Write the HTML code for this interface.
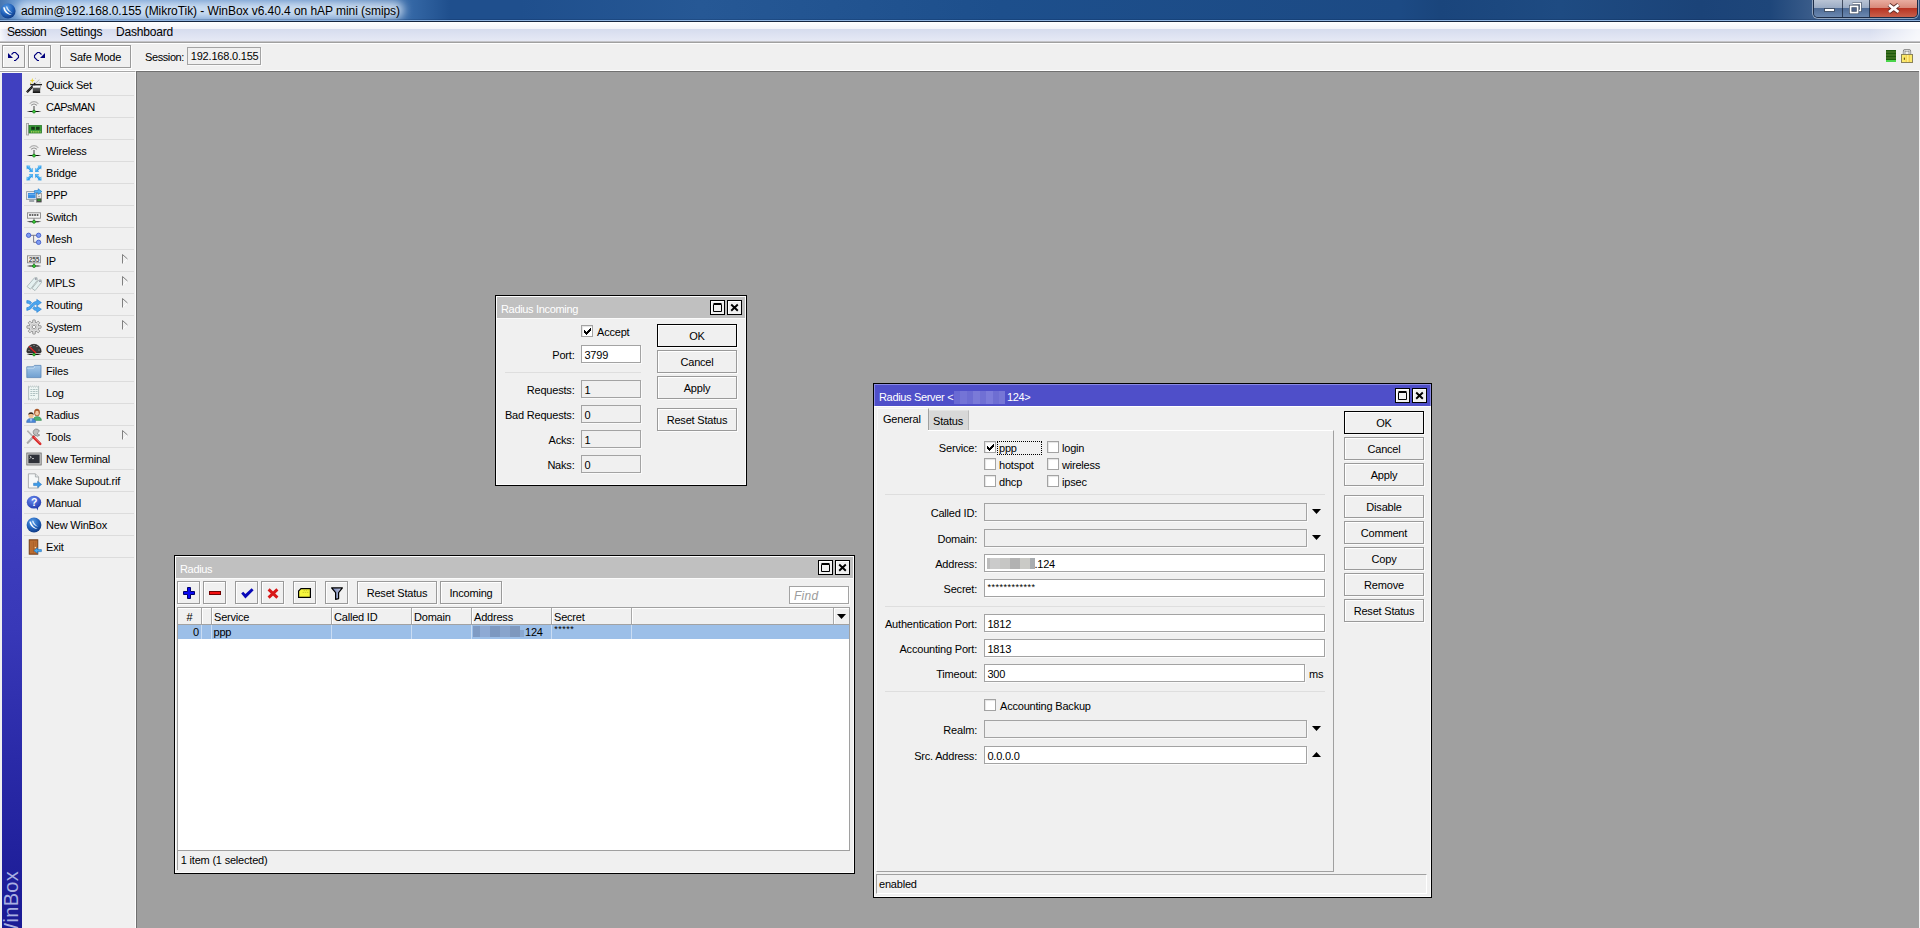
<!DOCTYPE html>
<html lang="en"><head><meta charset="utf-8"><title>WinBox</title>
<style>
html,body{margin:0;padding:0}
body{width:1920px;height:928px;position:relative;overflow:hidden;background:#a0a0a0;font:11px "Liberation Sans",sans-serif;letter-spacing:-0.2px;color:#000;-webkit-font-smoothing:antialiased}
div,span{position:absolute;box-sizing:border-box;white-space:nowrap}
svg{position:absolute;overflow:visible}
.t{line-height:14px;height:14px}
.r{text-align:right}
.c{text-align:center}
.btn{border:1px solid #9a9a9a;background:#f0f0f0;box-shadow:inset 1px 1px 0 #fff,1px 1px 0 #fcfcfc;text-align:center}
.btn.def{border-color:#000}
.fld{border:1px solid #a3a3a3;background:#fff;box-shadow:1px 1px 0 #fafafa}
.fld.ro{background:#f0f0f0}
.cb{width:12px;height:12px;border:1px solid #a3a3a3;background:#fff;box-shadow:inset 1px 1px 1px #e4e4e4}
.win{background:#f0f0f0;border:1px solid #000;box-shadow:inset 0 0 0 1px #fcfcfc}
.tb{left:1px;top:1px;right:1px;height:21px;background:#c0c0c0;color:#fff;box-shadow:0 1px 0 #fafafa}
.tb.act{background:#4f4fc9;color:#fff;box-shadow:0 1px 0 #fff,-1px 0 0 #8a8ae2,1px 0 0 #8a8ae2,0 -1px 0 #8a8ae2,-1px -1px 0 #8a8ae2,1px -1px 0 #8a8ae2}
.wb{width:15px;height:15px;border:1px solid #000;background:#f0f0f0;box-shadow:inset 1px 1px 0 #fff}
.sep{height:1px;background:#dedede}
.mi{left:24px;width:110px;height:22px;border-bottom:1px solid #dcdcdc}
.mi .t{left:22px;top:4px}
</style></head>
<body>
<div style="left:0;top:0;width:1920px;height:22px;background:linear-gradient(90deg,#4676b2 0,#5f8fc9 12px,#6c9ad2 60px,#5785c1 330px,#3568a6 410px,#1f4f8d 450px,#1f4f8d 520px,#265895 700px,#1d4f8c 1000px,#1c4a84 1400px,#1a457c 1440px,#1e4b82 1560px,#1b4378 1700px,#1e467a 1770px,#3a5c8a 1812px,#2c5080 1920px)"></div>
<div style="left:16px;top:1px;width:388px;height:18px;border-radius:9px;background:rgba(232,242,252,.8);filter:blur(5px)"></div>
<div style="left:0;top:19px;width:1920px;height:1px;background:rgba(0,20,60,.18)"></div>
<div style="left:0;top:20px;width:1920px;height:1px;background:#8fb3df"></div>
<div style="left:0;top:21px;width:1920px;height:1px;background:#142440"></div>
<svg width="16" height="16" viewBox="0 0 16 16" style="left:0px;top:2.5px" ><defs><radialGradient id="wbg" cx=".4" cy=".3" r=".8"><stop offset="0" stop-color="#5aa0e8"/><stop offset=".55" stop-color="#1f5fb8"/><stop offset="1" stop-color="#0b2f74"/></radialGradient></defs><circle cx="8" cy="8" r="7.6" fill="url(#wbg)"/><path d="M3.2 4.2C3.6 8.6 6.8 11.6 11.8 11.9C8.2 10.6 5.6 8.2 4.6 4.2Z" fill="#fff"/><path d="M5.9 3.6C6.6 7 8.9 9.3 12.6 9.9C10 8.6 8.1 6.6 7.2 3.6Z" fill="#e8f2ff" opacity=".9"/></svg>
<div class="t" style="left:21px;top:3px;font-size:12px;line-height:16px;height:16px;letter-spacing:-0.06px">admin@192.168.0.155 (MikroTik) - WinBox v6.40.4 on hAP mini (smips)</div>
<div style="left:1813px;top:0;width:105px;height:18px;border:1px solid rgba(20,30,50,.75);border-top:none;border-radius:0 0 5px 5px;box-shadow:0 0 0 1px rgba(255,255,255,.45);overflow:hidden"><div style="left:0;top:0;width:29px;height:17px;background:linear-gradient(180deg,#b9c4d5 0,#9aabc4 47%,#4f6c96 50%,#6b88b0 100%);border-right:1px solid rgba(20,30,50,.7)"></div><div style="left:29px;top:0;width:27px;height:17px;background:linear-gradient(180deg,#b9c4d5 0,#9aabc4 47%,#4f6c96 50%,#6b88b0 100%);border-right:1px solid rgba(20,30,50,.7)"></div><div style="left:56px;top:0;width:47px;height:17px;background:linear-gradient(180deg,#e9ada0 0,#d88878 47%,#b93422 50%,#c9604c 100%)"></div></div>
<svg width="12" height="8" viewBox="0 0 12 8" style="left:1823.5px;top:6.3px" ><rect x=".5" y="2.5" width="10" height="3" fill="#fff" stroke="#3b4a60" stroke-width=".9"/></svg>
<svg width="14" height="13" viewBox="0 0 14 13" style="left:1848px;top:2px" ><path d="M4.5 1.5H12.5V8.5H10.5" fill="none" stroke="#3b4a60" stroke-width="2.6"/><path d="M4.5 1.5H12.5V8.5H10.5" fill="none" stroke="#fff" stroke-width="1.3"/><rect x="2.6" y="4.4" width="7" height="6.2" fill="#50648a" stroke="#3b4a60" stroke-width="3"/><rect x="2.6" y="4.4" width="7" height="6.2" fill="none" stroke="#fff" stroke-width="1.7"/></svg>
<svg width="14" height="11" viewBox="0 0 14 11" style="left:1887px;top:3px" ><path d="M2 1.8L11.5 9M11.5 1.8L2 9" stroke="#5a2a26" stroke-width="4.4" fill="none"/><path d="M2 1.8L11.5 9M11.5 1.8L2 9" stroke="#fff" stroke-width="2.8" fill="none"/></svg>
<div style="left:0;top:22px;width:1920px;height:19px;background:linear-gradient(180deg,#fff 0,#f3f4fa 36%,#d6dcee 37%,#e6e9f5 100%)"></div>
<div style="left:0;top:22px;width:1920px;height:19px;background:linear-gradient(90deg,rgba(255,255,255,.75) 0,rgba(255,255,255,0) 8px,rgba(255,255,255,0) 1870px,rgba(255,255,255,.75) 1918px)"></div>
<div style="left:0;top:41px;width:1920px;height:1px;background:#c4c4c8"></div>
<div style="left:0;top:42px;width:1920px;height:1px;background:#a0a0a0"></div>
<div style="left:0;top:43px;width:1920px;height:28px;background:#f0f0f0;border-top:1px solid #fff"></div>
<div class="t" style="left:7px;top:24px;font-size:12px;line-height:16px;height:16px;letter-spacing:-0.5px">Session</div>
<div class="t" style="left:60px;top:24px;font-size:12px;line-height:16px;height:16px;letter-spacing:-0.12px">Settings</div>
<div class="t" style="left:116px;top:24px;font-size:12px;line-height:16px;height:16px;letter-spacing:-0.2px">Dashboard</div>
<div class="btn" style="left:2px;top:45px;width:23px;height:23px;line-height:23px"></div>
<svg width="30" height="30" viewBox="0 0 30 30" style="left:0px;top:42px" ><path d="M11.5 12.5L13.5 10.5H15.5L18.5 13.5V15.5L15.5 18.5H14" fill="none" stroke="#00007c" stroke-width="1.1"/><path d="M8 11V16H13Z" fill="#00007c"/></svg>
<div class="btn" style="left:28px;top:45px;width:23px;height:23px;line-height:23px"></div>
<svg width="30" height="30" viewBox="0 0 30 30" style="left:23px;top:42px" ><path d="M18.5 12.5L16.5 10.5H14.5L11.5 13.5V15.5L14.5 18.5H16" fill="none" stroke="#00007c" stroke-width="1.1"/><path d="M22 11V16H17Z" fill="#00007c"/></svg>
<div class="btn" style="left:60px;top:45px;width:71px;height:23px;line-height:23px">Safe Mode</div>
<div class="t" style="left:145px;top:50px;letter-spacing:-.4px">Session:</div>
<div class="fld ro" style="left:187px;top:47px;width:74px;height:18px"><span class="t" style="left:2.4px;top:2px"><span style="position:relative;top:-1px;left:.4px">192.168.0.155</span></span></div>
<div style="left:1886px;top:50px;width:10px;height:12px;background:repeating-linear-gradient(180deg,#1d5a0d 0,#1d5a0d 1px,#3b6e1f 1px,#3b6e1f 3px);border-bottom:2px solid #4ad44a"></div>
<svg width="14" height="16" viewBox="0 0 14 16" style="left:1900px;top:48px" ><path d="M4.1 6.5V3.7Q4.1 2.3 5.5 2.3H8.5Q9.9 2.3 9.9 3.7V6.5" fill="none" stroke="#7c7c7c" stroke-width="2.5"/><path d="M4.1 6.5V3.7Q4.1 2.3 5.5 2.3H8.5Q9.9 2.3 9.9 3.7V6.5" fill="none" stroke="#f4f4f4" stroke-width="1"/><rect x="1.5" y="6.5" width="11" height="8" fill="#fbe96c" stroke="#8a8258"/><rect x="5.6" y="7" width="1.6" height="7" fill="#f6d455"/><rect x="7.2" y="7" width="1.4" height="7" fill="#fff08a"/><rect x="8.6" y="7" width="1.4" height="7" fill="#f3cf52"/><rect x="3.8" y="9.6" width="1.2" height="2.2" fill="#6a5a10"/></svg>
<div style="left:0;top:70px;width:1920px;height:1px;background:#fff"></div>
<div style="left:0;top:71px;width:136px;height:857px;background:#f0f0f0;border-top:1px solid #a8a8a8;border-right:1px solid #fff"></div>
<div style="left:0;top:72px;width:135px;height:1px;background:#fbfbfb"></div>
<div style="left:2px;top:73px;width:20px;height:855px;background:linear-gradient(180deg,#4040c0 0,#4040c0 50%,#3838b8 65%,#2a2aa8 80%,#1a1a94 100%)"></div>
<div style="left:1px;top:1171px;width:300px;height:20px;transform-origin:0 0;transform:rotate(-90deg);font-size:20px;line-height:20px;text-align:right;color:#a9afe2;letter-spacing:.3px">RouterOS WinBox</div>
<div class="mi" style="top:74px"><svg width="16" height="16" viewBox="0 0 16 16" style="left:2px;top:3px" ><path d="M5.6 2.9l.7-1.9.7 1.9 1.9.7-1.9.7-.7 1.9-.7-1.9-1.9-.7z" fill="#ecd83a"/><circle cx="4.6" cy="6.3" r=".7" fill="#e8d030"/><circle cx="9.6" cy="1.2" r=".45" fill="#aaa"/><circle cx="14" cy="5.6" r=".5" fill="#999"/><path d="M.9 15.2L9.6 6.4" stroke="#111" stroke-width="2.3"/><path d="M1.4 14.7L9.6 6.4" stroke="#999" stroke-width=".6" stroke-dasharray="1 1"/><path d="M9.6 6.4L13.4 2.6" stroke="#e8e8e8" stroke-width="2.3"/><path d="M9.6 6.4L13.4 2.6" stroke="#999" stroke-width=".5"/><path d="M4.2 7.6H16" stroke="#222" stroke-width="1.3"/><defs><linearGradient id="hat" x1="0" y1="0" x2="0" y2="1"><stop offset="0" stop-color="#777"/><stop offset=".5" stop-color="#555"/><stop offset="1" stop-color="#333"/></linearGradient></defs><path d="M6.4 8.2H14.6L14 15.4H7Z" fill="url(#hat)"/><rect x="6.9" y="8.8" width="7.2" height="1.9" fill="#fafafa"/><path d="M6.8 15.3H14.2" stroke="#111" stroke-width="1.3"/></svg>
<div class="t">Quick Set</div></div>
<div class="mi" style="top:96px"><svg width="16" height="16" viewBox="0 0 16 16" style="left:2px;top:3px" ><path d="M3.6 4.8Q8 .6 12.4 4.8" fill="none" stroke="#b0b0b0" stroke-width="1.1"/><path d="M5.2 6.4Q8 3.6 10.8 6.4" fill="none" stroke="#8e8e8e" stroke-width="1.1"/><rect x="7.2" y="7" width="1.6" height="5.2" fill="#858585"/><path d="M.6 12.6L4 12.1H12L15.4 12.6L12 13.1H4Z" fill="#111"/><circle cx="8" cy="12.6" r="1.45" fill="#3ccf3c" stroke="#157a15" stroke-width=".8"/></svg>
<div class="t" style="letter-spacing:-.55px">CAPsMAN</div></div>
<div class="mi" style="top:118px"><svg width="16" height="16" viewBox="0 0 16 16" style="left:2px;top:3px" ><rect x=".6" y="2.5" width="2" height="11.5" fill="#e4e4e4" stroke="#9a9a9a" stroke-width=".8"/><rect x="3" y="4.5" width="12.5" height="7.5" fill="#3a9c3a" stroke="#2a7a2a" stroke-width=".8"/><rect x="5.2" y="5.8" width="3.6" height="3" fill="#163816"/><rect x="10" y="5.8" width="3.6" height="3" fill="#163816"/><path d="M5 10.8H14.5" stroke="#c8e060" stroke-width="1.2" stroke-dasharray="1.2 1"/></svg>
<div class="t">Interfaces</div></div>
<div class="mi" style="top:140px"><svg width="16" height="16" viewBox="0 0 16 16" style="left:2px;top:3px" ><path d="M3.6 4.8Q8 .6 12.4 4.8" fill="none" stroke="#b0b0b0" stroke-width="1.1"/><path d="M5.2 6.4Q8 3.6 10.8 6.4" fill="none" stroke="#8e8e8e" stroke-width="1.1"/><rect x="7.2" y="7" width="1.6" height="5.2" fill="#858585"/><path d="M.6 12.6L4 12.1H12L15.4 12.6L12 13.1H4Z" fill="#111"/><circle cx="8" cy="12.6" r="1.45" fill="#3ccf3c" stroke="#157a15" stroke-width=".8"/></svg>
<div class="t">Wireless</div></div>
<div class="mi" style="top:162px"><svg width="16" height="16" viewBox="0 0 16 16" style="left:2px;top:3px" ><g transform="translate(3.7 3.7) rotate(45)"><path d="M-4.5 0L-1.5 -2.7V-1.2H1.5V-2.7L4.5 0L1.5 2.7V1.2H-1.5V2.7Z" fill="#2f9eec"/><path d="M-3.3 -.1L-2 -1.2V-.35H2V-1.2L3.3 -.1" fill="none" stroke="#8fd6fb" stroke-width=".6"/></g><g transform="translate(12.3 3.7) rotate(-45)"><path d="M-4.5 0L-1.5 -2.7V-1.2H1.5V-2.7L4.5 0L1.5 2.7V1.2H-1.5V2.7Z" fill="#2f9eec"/><path d="M-3.3 -.1L-2 -1.2V-.35H2V-1.2L3.3 -.1" fill="none" stroke="#8fd6fb" stroke-width=".6"/></g><g transform="translate(3.7 12.3) rotate(-45)"><path d="M-4.5 0L-1.5 -2.7V-1.2H1.5V-2.7L4.5 0L1.5 2.7V1.2H-1.5V2.7Z" fill="#2f9eec"/><path d="M-3.3 -.1L-2 -1.2V-.35H2V-1.2L3.3 -.1" fill="none" stroke="#8fd6fb" stroke-width=".6"/></g><g transform="translate(12.3 12.3) rotate(45)"><path d="M-4.5 0L-1.5 -2.7V-1.2H1.5V-2.7L4.5 0L1.5 2.7V1.2H-1.5V2.7Z" fill="#2f9eec"/><path d="M-3.3 -.1L-2 -1.2V-.35H2V-1.2L3.3 -.1" fill="none" stroke="#8fd6fb" stroke-width=".6"/></g></svg>
<div class="t">Bridge</div></div>
<div class="mi" style="top:184px"><svg width="16" height="16" viewBox="0 0 16 16" style="left:2px;top:3px" ><rect x=".6" y="4.6" width="10.4" height="8" fill="#e4e8ee" stroke="#8c96a2" stroke-width=".8"/><rect x="2" y="6" width="7.6" height="5.2" fill="#3a8ee0"/><path d="M2.4 7.6H9.2" stroke="#7fc0f4" stroke-width=".7"/><rect x="3.2" y="13.2" width="5" height="1.6" fill="#8c949c"/><rect x="10.4" y="6.4" width="5.2" height="8.8" fill="#e2e2e2" stroke="#777" stroke-width=".6"/><rect x="10.7" y="11.4" width="4.6" height="3.5" fill="#3c3c3c"/><rect x="11.4" y="12.4" width="3.2" height="1.4" fill="#3a3"/><circle cx="13" cy="9.6" r=".5" fill="#555"/><path d="M8.4 3.6H12.2V1.8L15.8 4.6L12.2 7.4V5.6H8.4Z" fill="#58b4f4" stroke="#1a72c8" stroke-width=".6"/></svg>
<div class="t">PPP</div></div>
<div class="mi" style="top:206px"><svg width="16" height="16" viewBox="0 0 16 16" style="left:2px;top:3px" ><rect x="1.5" y="3.8" width="13" height="5.4" fill="#f4f4f4" stroke="#8a8a8a" stroke-width=".9"/><path d="M3.2 6H13" stroke="#333" stroke-width="1.5" stroke-dasharray="1.7 .8"/><rect x="7.5" y="9.5" width="1" height="2.5" fill="#666"/><path d="M.6 12.8L4 12.3H12L15.4 12.8L12 13.3H4Z" fill="#111"/><circle cx="8" cy="12.8" r="1.5" fill="#3ccf3c" stroke="#157a15" stroke-width=".8"/></svg>
<div class="t">Switch</div></div>
<div class="mi" style="top:228px"><svg width="16" height="16" viewBox="0 0 16 16" style="left:2px;top:3px" ><path d="M4 4.3H11M7.6 4.3V11.3H11" fill="none" stroke="#7a7a8a" stroke-width="1"/><circle cx="2.6" cy="4.3" r="2.2" fill="#7f9cf0" stroke="#3a55c8" stroke-width=".8"/><circle cx="12.6" cy="4.3" r="2.2" fill="#7f9cf0" stroke="#3a55c8" stroke-width=".8"/><circle cx="12.6" cy="11.3" r="2.2" fill="#7f9cf0" stroke="#3a55c8" stroke-width=".8"/></svg>
<div class="t">Mesh</div></div>
<div class="mi" style="top:250px"><svg width="16" height="16" viewBox="0 0 16 16" style="left:2px;top:3px" ><rect x="1.5" y="2.8" width="13" height="7" fill="#f2f2f2" stroke="#8a8a8a" stroke-width=".9"/><text x="8" y="8.6" font-family="Liberation Sans,sans-serif" font-size="6.6" font-weight="bold" text-anchor="middle" fill="#555">255</text><rect x="7.5" y="10" width="1" height="2.4" fill="#666"/><path d="M.6 13L4 12.5H12L15.4 13L12 13.5H4Z" fill="#111"/><circle cx="8" cy="13" r="1.5" fill="#3ccf3c" stroke="#157a15" stroke-width=".8"/></svg>
<div class="t">IP</div><svg width="6" height="10" style="left:98px;top:4px" viewBox="0 0 6 10"><path d="M.5 9.5L5.5 5" stroke="#fff" fill="none"/><path d="M.5 .5V9.5M.5 .5L5.5 5" stroke="#808080" fill="none"/></svg></div>
<div class="mi" style="top:272px"><svg width="16" height="16" viewBox="0 0 16 16" style="left:2px;top:3px" ><g fill="#e4f0f0" stroke="#9aa8a8" stroke-width=".7"><path d="M1 11.5L8.5 2.8L11 2.6L11.4 5.2L4.4 14.2Z"/><path d="M6 13.4L12.8 5L15.2 4.8L15.6 7.4L9 15.6Z"/></g><circle cx="9.8" cy="4" r=".6" fill="#fff" stroke="#889"/><circle cx="14" cy="6.2" r=".6" fill="#fff" stroke="#889"/></svg>
<div class="t">MPLS</div><svg width="6" height="10" style="left:98px;top:4px" viewBox="0 0 6 10"><path d="M.5 9.5L5.5 5" stroke="#fff" fill="none"/><path d="M.5 .5V9.5M.5 .5L5.5 5" stroke="#808080" fill="none"/></svg></div>
<div class="mi" style="top:294px"><svg width="16" height="16" viewBox="0 0 16 16" style="left:2px;top:3px" ><g fill="#4aa6f0" stroke="#1c78d0" stroke-width=".6"><path d="M.8 10.6C4.5 10.8 5.5 4.6 10.8 4.4V2.4L15.4 5.6L10.8 8.8V7C7 7.2 6 13.2 .8 13.4Z"/><path d="M.8 3.6C3 3.4 4.4 4.2 5.6 5.6L4.2 7.6C3.2 6.6 2.4 6.2 .8 6.2Z"/><path d="M8.4 9.6C9.2 10.6 10 11 10.8 11V9.2L15.4 12.2L10.8 15.4V13.6C9 13.6 7.8 12.8 6.8 11.6Z"/></g></svg>
<div class="t">Routing</div><svg width="6" height="10" style="left:98px;top:4px" viewBox="0 0 6 10"><path d="M.5 9.5L5.5 5" stroke="#fff" fill="none"/><path d="M.5 .5V9.5M.5 .5L5.5 5" stroke="#808080" fill="none"/></svg></div>
<div class="mi" style="top:316px"><svg width="16" height="16" viewBox="0 0 16 16" style="left:2px;top:3px" ><g fill="#dadada" stroke="#878787" stroke-width=".8"><rect x="6.7" y=".9" width="2.6" height="3.2" rx=".5" transform="rotate(0 8 8)"/><rect x="6.7" y=".9" width="2.6" height="3.2" rx=".5" transform="rotate(45 8 8)"/><rect x="6.7" y=".9" width="2.6" height="3.2" rx=".5" transform="rotate(90 8 8)"/><rect x="6.7" y=".9" width="2.6" height="3.2" rx=".5" transform="rotate(135 8 8)"/><rect x="6.7" y=".9" width="2.6" height="3.2" rx=".5" transform="rotate(180 8 8)"/><rect x="6.7" y=".9" width="2.6" height="3.2" rx=".5" transform="rotate(225 8 8)"/><rect x="6.7" y=".9" width="2.6" height="3.2" rx=".5" transform="rotate(270 8 8)"/><rect x="6.7" y=".9" width="2.6" height="3.2" rx=".5" transform="rotate(315 8 8)"/></g><circle cx="8" cy="8" r="4.7" fill="#dadada" stroke="#878787" stroke-width=".8"/><circle cx="8" cy="8" r="4.2" fill="#e2e2e2"/><g fill="#dadada"><rect x="7.1" y="2.6" width="1.8" height="2" transform="rotate(0 8 8)"/><rect x="7.1" y="2.6" width="1.8" height="2" transform="rotate(45 8 8)"/><rect x="7.1" y="2.6" width="1.8" height="2" transform="rotate(90 8 8)"/><rect x="7.1" y="2.6" width="1.8" height="2" transform="rotate(135 8 8)"/><rect x="7.1" y="2.6" width="1.8" height="2" transform="rotate(180 8 8)"/><rect x="7.1" y="2.6" width="1.8" height="2" transform="rotate(225 8 8)"/><rect x="7.1" y="2.6" width="1.8" height="2" transform="rotate(270 8 8)"/><rect x="7.1" y="2.6" width="1.8" height="2" transform="rotate(315 8 8)"/></g><circle cx="8" cy="8" r="3" fill="none" stroke="#b4b4b4" stroke-width=".6"/><circle cx="8" cy="8" r="1.7" fill="#fafafa" stroke="#878787" stroke-width=".8"/></svg>
<div class="t">System</div><svg width="6" height="10" style="left:98px;top:4px" viewBox="0 0 6 10"><path d="M.5 9.5L5.5 5" stroke="#fff" fill="none"/><path d="M.5 .5V9.5M.5 .5L5.5 5" stroke="#808080" fill="none"/></svg></div>
<div class="mi" style="top:338px"><svg width="16" height="16" viewBox="0 0 16 16" style="left:2px;top:3px" ><path d="M.8 10.5A7.2 7.2 0 0 1 15.2 10.5C15.2 11.4 14.6 12 13.6 12H2.4C1.4 12 .8 11.4 .8 10.5Z" fill="#3a3a3a" stroke="#111" stroke-width=".6"/><path d="M3 5.4L10 12" stroke="#e82020" stroke-width="1.3"/><g fill="#ccc"><circle cx="3" cy="9.5" r=".5"/><circle cx="5" cy="5.6" r=".5"/><circle cx="8" cy="4.6" r=".5"/><circle cx="11" cy="5.6" r=".5"/><circle cx="13" cy="9" r=".5"/></g><path d="M.6 13.6L4 13.1H12L15.4 13.6L12 14.1H4Z" fill="#111"/><circle cx="8" cy="13.6" r="1.3" fill="#3ccf3c" stroke="#157a15" stroke-width=".8"/></svg>
<div class="t">Queues</div></div>
<div class="mi" style="top:360px"><svg width="16" height="16" viewBox="0 0 16 16" style="left:2px;top:3px" ><defs><linearGradient id="fg" x1="0" y1="0" x2="0" y2="1"><stop offset="0" stop-color="#a8caea"/><stop offset="1" stop-color="#6f9fd0"/></linearGradient></defs><path d="M.8 3.8H7L8.4 2.4H15V14.6H.8Z" fill="url(#fg)" stroke="#5a86b8" stroke-width=".8"/><path d="M1 5.2H7.6L9 3.8" fill="none" stroke="#cfe2f4" stroke-width=".7"/></svg>
<div class="t">Files</div></div>
<div class="mi" style="top:382px"><svg width="16" height="16" viewBox="0 0 16 16" style="left:2px;top:3px" ><path d="M2.6 1.2l1 .8 1-.8 1 .8 1-.8 1 .8 1-.8 1 .8 1-.8 1 .8 1-.8V14.8l-1-.8-1 .8-1-.8-1 .8-1-.8-1 .8-1-.8-1 .8-1-.8-1 .8Z" fill="#eef6f4" stroke="#9aa" stroke-width=".7"/><path d="M4.4 4.5H11.6M4.4 6.5H11.6M4.4 8.5H11.6M4.4 10.5H9" stroke="#a8bcbc" stroke-width=".9" stroke-dasharray="2 .6"/></svg>
<div class="t">Log</div></div>
<div class="mi" style="top:404px"><svg width="16" height="16" viewBox="0 0 16 16" style="left:2px;top:3px" ><path d="M7.4 13.4C7.4 10.6 9 9.6 11 9.6S15.4 10.6 15.4 13.4Z" fill="#4cb070" stroke="#2a8048" stroke-width=".5"/><ellipse cx="11" cy="5.4" rx="2.9" ry="3.6" fill="#a8582a"/><ellipse cx="11" cy="6.2" rx="1.8" ry="2.4" fill="#f4c8a0"/><path d="M.6 15.4C.6 12.4 2.6 11.4 5 11.4S9.6 12.4 9.6 15.4Z" fill="#4a8ad8" stroke="#2a5aa8" stroke-width=".5"/><path d="M4.4 11.6H5.6L5.3 14.6H4.7Z" fill="#fff"/><circle cx="5" cy="8.4" r="2.6" fill="#f0c090"/><path d="M2.3 8A2.7 2.7 0 0 1 7.7 8C6.6 6.8 3.4 6.8 2.3 8Z" fill="#3a2a20"/></svg>
<div class="t">Radius</div></div>
<div class="mi" style="top:426px"><svg width="16" height="16" viewBox="0 0 16 16" style="left:2px;top:3px" ><path d="M1.2 14.4L9.4 5.6" stroke="#8a8a8a" stroke-width="1.9"/><path d="M1.2 14.4L9.4 5.6" stroke="#e4e4e4" stroke-width=".7"/><path d="M9.2 6.2A3.2 3.2 0 1 1 13.4 2.2L11.4 4L12 5.6L13.8 6A3.2 3.2 0 0 1 9.2 6.2Z" fill="#bdbdbd" stroke="#7a7a7a" stroke-width=".7"/><path d="M1.4 1.8L7.4 8" stroke="#9a9a9a" stroke-width="1.5"/><path d="M1.4 1.8L7.4 8" stroke="#eee" stroke-width=".5"/><path d="M7.4 8L14.2 14.8" stroke="#d82828" stroke-width="2.6" stroke-linecap="round"/><path d="M8 8L14.2 14.2" stroke="#f08080" stroke-width=".6"/></svg>
<div class="t">Tools</div><svg width="6" height="10" style="left:98px;top:4px" viewBox="0 0 6 10"><path d="M.5 9.5L5.5 5" stroke="#fff" fill="none"/><path d="M.5 .5V9.5M.5 .5L5.5 5" stroke="#808080" fill="none"/></svg></div>
<div class="mi" style="top:448px"><svg width="16" height="16" viewBox="0 0 16 16" style="left:2px;top:3px" ><rect x=".8" y="2" width="14.4" height="12" fill="#c8c8c8" stroke="#6a6a6a" stroke-width=".8"/><rect x="2.4" y="3.6" width="11.2" height="8.6" fill="#2e3038"/><path d="M3.6 5L5.4 6.2L3.6 7.4M6 7.6H8" stroke="#e4e4e4" stroke-width=".8" fill="none"/></svg>
<div class="t">New Terminal</div></div>
<div class="mi" style="top:470px"><svg width="16" height="16" viewBox="0 0 16 16" style="left:2px;top:3px" ><path d="M2.4 .8H9.4L12.6 4V15H2.4Z" fill="#f6f8f8" stroke="#9a9ea0" stroke-width=".8"/><path d="M9.4 .8V4H12.6" fill="#dfe4e4" stroke="#9a9ea0" stroke-width=".7"/><path d="M7.6 10.2H11.6V8.2L15.6 11.4L11.6 14.6V12.6H7.6Z" fill="#3a9ae8" stroke="#1a6ab8" stroke-width=".5"/></svg>
<div class="t">Make Supout.rif</div></div>
<div class="mi" style="top:492px"><svg width="16" height="16" viewBox="0 0 16 16" style="left:2px;top:3px" ><defs><radialGradient id="mg" cx=".4" cy=".3" r=".8"><stop offset="0" stop-color="#6a8cf0"/><stop offset="1" stop-color="#1c34a8"/></radialGradient></defs><path d="M10 12L11.6 15.4L12.4 11.4Z" fill="#1c34a8"/><ellipse cx="8" cy="7.2" rx="7.2" ry="6.4" fill="url(#mg)"/><text x="8" y="11.3" font-family="Liberation Sans,sans-serif" font-size="10.5" font-weight="bold" text-anchor="middle" fill="#fff">?</text></svg>
<div class="t">Manual</div></div>
<div class="mi" style="top:514px"><svg width="16" height="16" viewBox="0 0 16 16" style="left:2px;top:3px" ><defs><radialGradient id="wg2" cx=".4" cy=".3" r=".8"><stop offset="0" stop-color="#5aa0e8"/><stop offset=".55" stop-color="#1f5fb8"/><stop offset="1" stop-color="#0b2f74"/></radialGradient></defs><circle cx="8" cy="8" r="7.4" fill="url(#wg2)"/><path d="M3.4 4.4C3.8 8.6 6.8 11.4 11.6 11.8C8.2 10.6 5.8 8.2 4.8 4.4Z" fill="#fff"/><path d="M6 3.8C6.6 7 8.8 9.2 12.4 9.8C10 8.6 8.2 6.6 7.3 3.8Z" fill="#e8f2ff" opacity=".9"/></svg>
<div class="t">New WinBox</div></div>
<div class="mi" style="top:536px"><svg width="16" height="16" viewBox="0 0 16 16" style="left:2px;top:3px" ><rect x="3.2" y=".8" width="8.6" height="14.4" fill="#b4662c" stroke="#6e3a14" stroke-width=".9"/><rect x="4.6" y="2.2" width="5.8" height="11.8" fill="#c87838"/><path d="M6 2.5V13.8M7.6 2.5V13.8M9.2 2.5V13.8" stroke="#9c5422" stroke-width=".7"/><circle cx="9.4" cy="8.6" r=".8" fill="#f8e0b0"/><path d="M15.4 10.6H11.6V8.8L7.8 11.6L11.6 14.4V12.6H15.4Z" fill="#4aaaf0" stroke="#1a6ab8" stroke-width=".6"/></svg>
<div class="t">Exit</div></div>
<div style="left:136px;top:71px;width:1783px;height:1px;background:#707070"></div>
<div style="left:136px;top:71px;width:1px;height:857px;background:#707070"></div>
<div style="left:1919px;top:71px;width:1px;height:857px;background:#f0f0f0"></div>
<div class="win" style="left:495px;top:295px;width:252px;height:191px"><div class="tb"><div class="t" style="left:4px;top:5px;letter-spacing:-.33px">Radius Incoming</div></div></div>
<div class="wb" style="left:710px;top:300px"><svg width="9" height="9" style="left:2px;top:2px" viewBox="0 0 9 9"><path d="M.5 1.5H8.5V8.5H.5Z M.5 .5H8.5" fill="none" stroke="#000"/></svg></div>
<div class="wb" style="left:727px;top:300px"><svg width="9" height="9" style="left:2px;top:2px" viewBox="0 0 9 9"><path d="M1.2 1.5L7.8 7.8M7.8 1.5L1.2 7.8" fill="none" stroke="#000" stroke-width="1.9"/></svg></div>
<div class="cb" style="left:581px;top:325px"><svg width="10" height="10" style="left:0;top:0" viewBox="0 0 10 10" shape-rendering="crispEdges"><path d="M2 4h1v3h-1zM3 5h1v3h-1zM4 6h1v3h-1zM5 5h1v3h-1zM6 4h1v3h-1zM7 3h1v3h-1zM8 2h1v3h-1z" fill="#000"/></svg></div>
<div class="t" style="left:597px;top:325px;">Accept</div>
<div class="t r" style="left:374.5px;top:348px;width:200px;">Port:</div>
<div class="fld" style="left:581px;top:345px;width:60px;height:18px"><span class="t" style="left:2.4px;top:2px">3799</span></div>
<div class="sep" style="left:505px;top:372px;width:136px;height:1px;"></div>
<div class="t r" style="left:374.5px;top:383px;width:200px;">Requests:</div>
<div class="fld ro" style="left:581px;top:380px;width:60px;height:18px"><span class="t" style="left:2.4px;top:2px">1</span></div>
<div class="t r" style="left:374.5px;top:408px;width:200px;">Bad Requests:</div>
<div class="fld ro" style="left:581px;top:405px;width:60px;height:18px"><span class="t" style="left:2.4px;top:2px">0</span></div>
<div class="t r" style="left:374.5px;top:433px;width:200px;">Acks:</div>
<div class="fld ro" style="left:581px;top:430px;width:60px;height:18px"><span class="t" style="left:2.4px;top:2px">1</span></div>
<div class="t r" style="left:374.5px;top:458px;width:200px;">Naks:</div>
<div class="fld ro" style="left:581px;top:455px;width:60px;height:18px"><span class="t" style="left:2.4px;top:2px">0</span></div>
<div class="btn def" style="left:657px;top:324px;width:80px;height:23px;line-height:23px">OK</div>
<div class="btn" style="left:657px;top:350px;width:80px;height:23px;line-height:23px">Cancel</div>
<div class="btn" style="left:657px;top:376px;width:80px;height:23px;line-height:23px">Apply</div>
<div class="btn" style="left:657px;top:408px;width:80px;height:23px;line-height:23px">Reset Status</div>
<div class="win" style="left:174px;top:555px;width:681px;height:319px"><div class="tb"><div class="t" style="left:4px;top:5px;letter-spacing:-.33px">Radius</div></div></div>
<div class="wb" style="left:818px;top:560px"><svg width="9" height="9" style="left:2px;top:2px" viewBox="0 0 9 9"><path d="M.5 1.5H8.5V8.5H.5Z M.5 .5H8.5" fill="none" stroke="#000"/></svg></div>
<div class="wb" style="left:835px;top:560px"><svg width="9" height="9" style="left:2px;top:2px" viewBox="0 0 9 9"><path d="M1.2 1.5L7.8 7.8M7.8 1.5L1.2 7.8" fill="none" stroke="#000" stroke-width="1.9"/></svg></div>
<div class="btn" style="left:177px;top:581px;width:23px;height:23px;line-height:23px"></div>
<svg width="12" height="12" viewBox="0 0 12 12" style="left:183px;top:587px" ><path d="M4.5 .5H7.5V4.5H11.5V7.5H7.5V11.5H4.5V7.5H.5V4.5H4.5Z" fill="#0808f4" stroke="#00006c" stroke-width="1"/></svg>
<div class="btn" style="left:203px;top:581px;width:23px;height:23px;line-height:23px"></div>
<svg width="12" height="4" viewBox="0 0 12 4" style="left:209px;top:591px" ><rect x=".5" y=".5" width="11" height="3" fill="#f41010" stroke="#700000" stroke-width="1"/></svg>
<div class="btn" style="left:235px;top:581px;width:23px;height:23px;line-height:23px"></div>
<svg width="13" height="11" viewBox="0 0 13 11" style="left:241px;top:588px" ><path d="M.2 5.6L2.2 3.8L4.4 6L10.6 .2L12.6 2.2L4.4 10.4Z" fill="#0808b8"/></svg>
<div class="btn" style="left:261px;top:581px;width:23px;height:23px;line-height:23px"></div>
<svg width="12" height="11" viewBox="0 0 12 11" style="left:267px;top:588px" ><path d="M1.6 1.4L10.4 9.6M10.4 1.4L1.6 9.6" stroke="#d81818" stroke-width="3"/></svg>
<div class="btn" style="left:293px;top:581px;width:23px;height:23px;line-height:23px"></div>
<svg width="13" height="10" viewBox="0 0 13 10" style="left:298px;top:588px" ><path d="M3 .6H12.4V9.4H.6V3Z" fill="#f6f63c" stroke="#000" stroke-width="1.2"/><path d="M5.6 2.6H10.5M4.6 4.4H10.5" stroke="#c8c828" stroke-width=".9" stroke-dasharray="1.4 .8"/></svg>
<div class="btn" style="left:325px;top:581px;width:23px;height:23px;line-height:23px"></div>
<svg width="12" height="13" viewBox="0 0 12 13" style="left:331px;top:587px" ><defs><linearGradient id="flg" x1="0" y1="0" x2="1" y2="0"><stop offset="0" stop-color="#6c7cb0"/><stop offset="1" stop-color="#c4cce4"/></linearGradient></defs><path d="M.6 .9H11.4L7.6 5.6V11.6L4.6 12.4V5.6Z" fill="url(#flg)" stroke="#000" stroke-width="1.2" stroke-linejoin="round"/></svg>
<div class="btn" style="left:357px;top:581px;width:80px;height:23px;line-height:23px">Reset Status</div>
<div class="btn" style="left:440px;top:581px;width:62px;height:23px;line-height:23px">Incoming</div>
<div class="fld" style="left:789px;top:586px;width:60px;height:18px"><span class="t" style="left:2.4px;top:2px"><i style="color:#9c9c9c;font-size:12px;letter-spacing:.25px;margin-left:1.6px">Find</i></span></div>
<div class="" style="left:177px;top:607px;width:673px;height:244px;background:#fff;border:1px solid #a0a0a0"></div>
<div class="" style="left:178px;top:608px;width:671px;height:17px;background:#f0f0f0;border-top:1px solid #fff;border-bottom:1px solid #a2a2a2"></div>
<div class="t c" style="left:178px;top:610px;width:23px;">#</div>
<div class="" style="left:201px;top:608px;width:1px;height:16px;background:#a8a8a8"></div>
<div class="" style="left:202px;top:608px;width:1px;height:16px;background:#fff"></div>
<div class="" style="left:211px;top:608px;width:1px;height:16px;background:#a8a8a8"></div>
<div class="" style="left:212px;top:608px;width:1px;height:16px;background:#fff"></div>
<div class="t" style="left:214px;top:610px;">Service</div>
<div class="" style="left:331px;top:608px;width:1px;height:16px;background:#a8a8a8"></div>
<div class="" style="left:332px;top:608px;width:1px;height:16px;background:#fff"></div>
<div class="t" style="left:334px;top:610px;">Called ID</div>
<div class="" style="left:411px;top:608px;width:1px;height:16px;background:#a8a8a8"></div>
<div class="" style="left:412px;top:608px;width:1px;height:16px;background:#fff"></div>
<div class="t" style="left:414px;top:610px;">Domain</div>
<div class="" style="left:471px;top:608px;width:1px;height:16px;background:#a8a8a8"></div>
<div class="" style="left:472px;top:608px;width:1px;height:16px;background:#fff"></div>
<div class="t" style="left:474px;top:610px;">Address</div>
<div class="" style="left:551px;top:608px;width:1px;height:16px;background:#a8a8a8"></div>
<div class="" style="left:552px;top:608px;width:1px;height:16px;background:#fff"></div>
<div class="t" style="left:554px;top:610px;">Secret</div>
<div class="" style="left:631px;top:608px;width:1px;height:16px;background:#a8a8a8"></div>
<div class="" style="left:632px;top:608px;width:1px;height:16px;background:#fff"></div>
<div class="" style="left:833px;top:608px;width:1px;height:16px;background:#a8a8a8"></div>
<div class="" style="left:834px;top:608px;width:1px;height:16px;background:#fff"></div>
<svg width="9" height="5" style="left:837px;top:614px" viewBox="0 0 9 5"><path d="M0 0H9L4.5 5Z" fill="#000"/></svg>
<div class="" style="left:178px;top:625px;width:671px;height:14px;background:#9cbfe8"></div>
<div class="" style="left:201px;top:625px;width:1px;height:14px;background:#c9dcf3"></div>
<div class="" style="left:211px;top:625px;width:1px;height:14px;background:#c9dcf3"></div>
<div class="" style="left:331px;top:625px;width:1px;height:14px;background:#c9dcf3"></div>
<div class="" style="left:411px;top:625px;width:1px;height:14px;background:#c9dcf3"></div>
<div class="" style="left:471px;top:625px;width:1px;height:14px;background:#c9dcf3"></div>
<div class="" style="left:551px;top:625px;width:1px;height:14px;background:#c9dcf3"></div>
<div class="" style="left:631px;top:625px;width:1px;height:14px;background:#c9dcf3"></div>
<div class="t r" style="left:179px;top:625px;width:20px;">0</div>
<div class="t" style="left:213.5px;top:625px;">ppp</div>
<div style="left:473px;top:626px;width:7px;height:11px;background:#7f9bc4"></div><div style="left:480px;top:626px;width:10px;height:11px;background:#8eaad4"></div><div style="left:490px;top:626px;width:10px;height:11px;background:#7c98c0"></div><div style="left:500px;top:626px;width:10px;height:11px;background:#88a4cc"></div><div style="left:510px;top:626px;width:10px;height:11px;background:#7e98be"></div>
<div style="left:520px;top:630px;width:4px;height:7px;background:#8aa8d0"></div>
<div class="t" style="left:525px;top:625px;">124</div>
<div class="t" style="left:554.3px;top:622px;font-size:9px;letter-spacing:.5px">*****</div>
<div class="" style="left:177px;top:851px;width:1px;height:19px;background:#a0a0a0"></div>
<div class="t" style="left:180.8px;top:853px;">1 item (1 selected)</div>
<div class="win" style="left:873px;top:383px;width:559px;height:515px"><div class="tb act"><div class="t" style="left:4px;top:5px;letter-spacing:-.33px">Radius Server &lt;</div></div></div>
<div class="wb" style="left:1395px;top:388px"><svg width="9" height="9" style="left:2px;top:2px" viewBox="0 0 9 9"><path d="M.5 1.5H8.5V8.5H.5Z M.5 .5H8.5" fill="none" stroke="#000"/></svg></div>
<div class="wb" style="left:1412px;top:388px"><svg width="9" height="9" style="left:2px;top:2px" viewBox="0 0 9 9"><path d="M1.2 1.5L7.8 7.8M7.8 1.5L1.2 7.8" fill="none" stroke="#000" stroke-width="1.9"/></svg></div>
<div style="left:954px;top:391px;width:6px;height:13px;background:#6a6ad4"></div><div style="left:960px;top:391px;width:7px;height:13px;background:#7474d6"></div><div style="left:967px;top:391px;width:6px;height:13px;background:#6c6cd2"></div><div style="left:973px;top:391px;width:7px;height:13px;background:#7a7ad8"></div><div style="left:980px;top:391px;width:6px;height:13px;background:#7070d4"></div><div style="left:986px;top:391px;width:7px;height:13px;background:#7c7cda"></div><div style="left:993px;top:391px;width:6px;height:13px;background:#6e6ed2"></div><div style="left:999px;top:391px;width:6px;height:13px;background:#7676d6"></div>
<div class="t" style="left:1007px;top:390px;color:#fff;letter-spacing:-.33px">124&gt;</div>
<div class="" style="left:929px;top:410px;width:40px;height:20px;background:#d8d8d8;border-top:1px solid #e2e2e2;border-right:1px solid #bcbcbc"></div>
<div class="t" style="left:933px;top:414px;">Status</div>
<div class="" style="left:876px;top:430px;width:1458px;height:442px;display:none"></div>
<div class="" style="left:876px;top:430px;width:458px;height:442px;border-top:1px solid #fff;border-left:1px solid #f8f8f8;border-right:1px solid #a0a0a0;border-bottom:1px solid #a0a0a0"></div>
<div class="" style="left:877px;top:408px;width:52px;height:22px;background:#f0f0f0;border-top:1px solid #fafafa;border-left:1px solid #f8f8f8;border-right:1px solid #a0a0a0"></div>
<div class="" style="left:877px;top:430px;width:51px;height:1px;background:#f0f0f0"></div>
<div class="t" style="left:883px;top:412px;">General</div>
<div class="t r" style="left:777px;top:441px;width:200px;">Service:</div>
<div class="cb" style="left:984px;top:441px"><svg width="10" height="10" style="left:0;top:0" viewBox="0 0 10 10" shape-rendering="crispEdges"><path d="M2 4h1v3h-1zM3 5h1v3h-1zM4 6h1v3h-1zM5 5h1v3h-1zM6 4h1v3h-1zM7 3h1v3h-1zM8 2h1v3h-1z" fill="#000"/></svg></div>
<div class="t" style="left:999px;top:441px;">ppp</div>
<div class="cb" style="left:1047px;top:441px"></div>
<div class="t" style="left:1062px;top:441px;">login</div>
<div class="cb" style="left:984px;top:458px"></div>
<div class="t" style="left:999px;top:458px;">hotspot</div>
<div class="cb" style="left:1047px;top:458px"></div>
<div class="t" style="left:1062px;top:458px;">wireless</div>
<div class="cb" style="left:984px;top:475px"></div>
<div class="t" style="left:999px;top:475px;">dhcp</div>
<div class="cb" style="left:1047px;top:475px"></div>
<div class="t" style="left:1062px;top:475px;">ipsec</div>
<div class="" style="left:997px;top:441px;width:45px;height:14px;border:1px dotted #000"></div>
<div class="sep" style="left:885px;top:494px;width:440px;height:1px;"></div>
<div class="t r" style="left:777px;top:506px;width:200px;">Called ID:</div>
<div class="fld ro" style="left:984px;top:503px;width:323px;height:18px"><span class="t" style="left:2.4px;top:2px"></span></div>
<svg width="9" height="5" style="left:1312px;top:509px" viewBox="0 0 9 5"><path d="M0 0H9L4.5 5Z" fill="#000"/></svg>
<div class="t r" style="left:777px;top:532px;width:200px;">Domain:</div>
<div class="fld ro" style="left:984px;top:529px;width:323px;height:18px"><span class="t" style="left:2.4px;top:2px"></span></div>
<svg width="9" height="5" style="left:1312px;top:535px" viewBox="0 0 9 5"><path d="M0 0H9L4.5 5Z" fill="#000"/></svg>
<div class="t r" style="left:777px;top:557px;width:200px;">Address:</div>
<div class="fld" style="left:984px;top:554px;width:341px;height:18px"><span class="t" style="left:2.4px;top:2px"><span style="position:static;display:inline-block;width:47px"></span>.124</span></div>
<div style="left:987px;top:558px;width:3px;height:11px;background:#bcbcbc"></div><div style="left:990px;top:558px;width:10px;height:11px;background:#cbcbcb"></div><div style="left:1000px;top:558px;width:10px;height:11px;background:#c6c6c4"></div><div style="left:1010px;top:558px;width:10px;height:11px;background:#b2b2b2"></div><div style="left:1020px;top:558px;width:10px;height:11px;background:#cacac6"></div><div style="left:1030px;top:558px;width:5px;height:11px;background:#a8acb0"></div>
<div class="t r" style="left:777px;top:582px;width:200px;">Secret:</div>
<div class="fld" style="left:984px;top:579px;width:341px;height:18px"><span class="t" style="left:2.4px;top:2px"><span style="position:relative;font-size:9px;letter-spacing:.5px;top:-3.5px;left:.2px">************</span></span></div>
<div class="sep" style="left:885px;top:606px;width:440px;height:1px;"></div>
<div class="t r" style="left:777px;top:617px;width:200px;">Authentication Port:</div>
<div class="fld" style="left:984px;top:614px;width:341px;height:18px"><span class="t" style="left:2.4px;top:2px">1812</span></div>
<div class="t r" style="left:777px;top:642px;width:200px;">Accounting Port:</div>
<div class="fld" style="left:984px;top:639px;width:341px;height:18px"><span class="t" style="left:2.4px;top:2px">1813</span></div>
<div class="t r" style="left:777px;top:667px;width:200px;">Timeout:</div>
<div class="fld" style="left:984px;top:664px;width:321px;height:18px"><span class="t" style="left:2.4px;top:2px">300</span></div>
<div class="t" style="left:1309px;top:667px;">ms</div>
<div class="sep" style="left:885px;top:691px;width:440px;height:1px;"></div>
<div class="cb" style="left:984px;top:699px"></div>
<div class="t" style="left:1000px;top:699px;">Accounting Backup</div>
<div class="t r" style="left:777px;top:723px;width:200px;">Realm:</div>
<div class="fld ro" style="left:984px;top:720px;width:323px;height:18px"><span class="t" style="left:2.4px;top:2px"></span></div>
<svg width="9" height="5" style="left:1312px;top:726px" viewBox="0 0 9 5"><path d="M0 0H9L4.5 5Z" fill="#000"/></svg>
<div class="t r" style="left:777px;top:749px;width:200px;">Src. Address:</div>
<div class="fld" style="left:984px;top:746px;width:323px;height:18px"><span class="t" style="left:2.4px;top:2px">0.0.0.0</span></div>
<svg width="9" height="5" style="left:1312px;top:752px" viewBox="0 0 9 5"><path d="M0 5H9L4.5 0Z" fill="#000"/></svg>
<div class="btn def" style="left:1344px;top:411px;width:80px;height:23px;line-height:23px">OK</div>
<div class="btn" style="left:1344px;top:437px;width:80px;height:23px;line-height:23px">Cancel</div>
<div class="btn" style="left:1344px;top:463px;width:80px;height:23px;line-height:23px">Apply</div>
<div class="btn" style="left:1344px;top:495px;width:80px;height:23px;line-height:23px">Disable</div>
<div class="btn" style="left:1344px;top:521px;width:80px;height:23px;line-height:23px">Comment</div>
<div class="btn" style="left:1344px;top:547px;width:80px;height:23px;line-height:23px">Copy</div>
<div class="btn" style="left:1344px;top:573px;width:80px;height:23px;line-height:23px">Remove</div>
<div class="btn" style="left:1344px;top:599px;width:80px;height:23px;line-height:23px">Reset Status</div>
<div class="" style="left:876px;top:874px;width:551px;height:20px;border-top:1px solid #a0a0a0;border-left:1px solid #a0a0a0;border-bottom:1px solid #fff;border-right:1px solid #fff"></div>
<div class="t" style="left:879px;top:877px;">enabled</div>
</body></html>
